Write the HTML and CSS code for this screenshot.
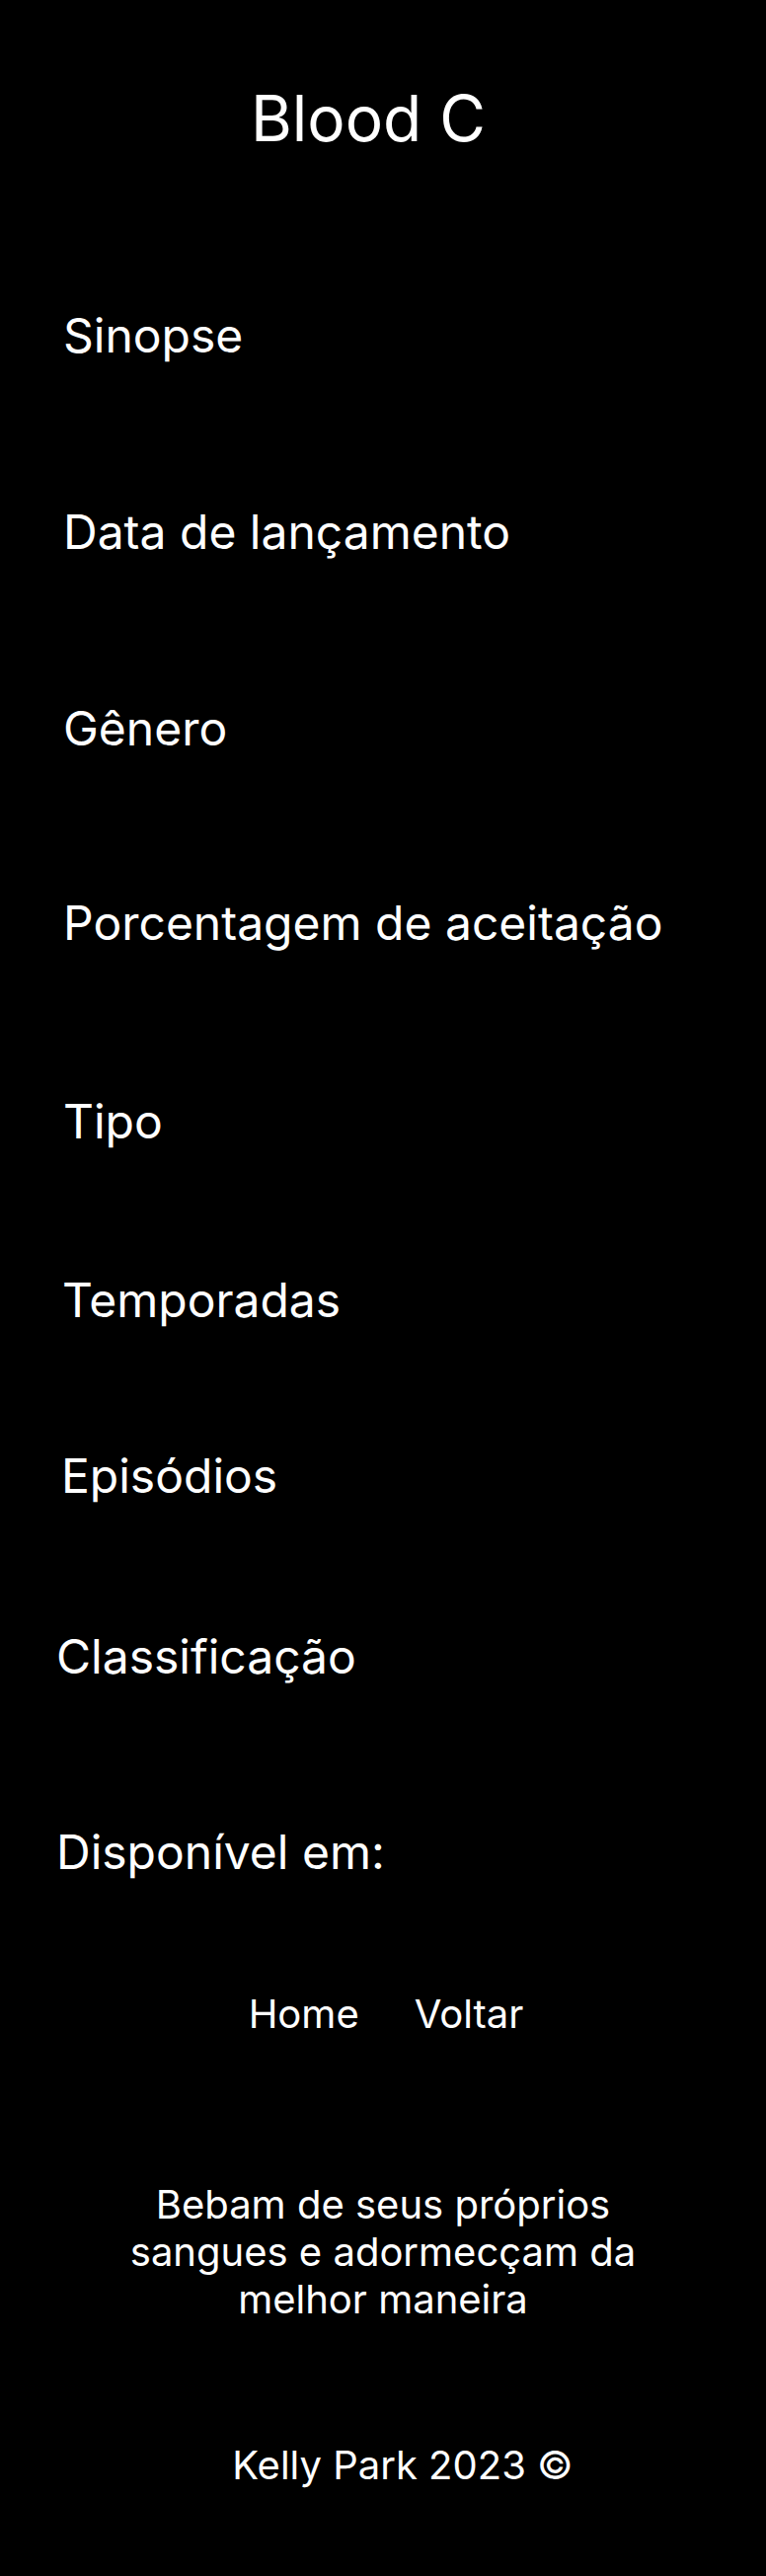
FILE: index.html
```html
<!DOCTYPE html>
<html lang="pt-BR">
<head>
<meta charset="utf-8">
<title>Blood C</title>
<link rel="stylesheet" href="styles.css">
</head>
<body>
<header class="header">
  <h1 class="title">Blood C</h1>
</header>
<main class="info">
  <p class="label label-a sp-first">Sinopse</p>
  <p class="label label-a sp-141">Data de lançamento</p>
  <p class="label label-a sp-141">Gênero</p>
  <p class="label label-a sp-139">Porcentagem de aceitação</p>
  <p class="label label-a sp-143">Tipo</p>
  <p class="label label-b sp-123">Temporadas</p>
  <p class="label label-c sp-120">Episódios</p>
  <p class="label label-d sp-125">Classificação</p>
  <p class="label label-d sp-140">Disponível em:</p>
</main>
<nav class="nav">
  <a class="nav-link" href="#">Home</a>
  <a class="nav-link" href="#">Voltar</a>
</nav>
<footer class="footer">
  <p class="quote">Bebam de seus próprios sangues e adormecçam da melhor maneira</p>
  <p class="copy">Kelly Park 2023 ©</p>
</footer>
</body>
</html>
```

FILE: styles.css
```css
html, body {
  margin: 0;
  padding: 0;
  background: #000;
}

body {
  color: #fff;
  font-family: Inter, "Noto Sans", "Liberation Sans", sans-serif;
  font-weight: 400;
  width: 776px;
  min-height: 2609px;
}

.header {
  display: flex;
  justify-content: center;
  padding-top: 81px;
  padding-right: 30px;
}

.title {
  margin: 0;
  font-size: 64px;
  line-height: 77px;
  font-weight: 400;
}

.info {
  display: flex;
  flex-direction: column;
  align-items: flex-start;
}

.label {
  margin: 0;
  font-size: 48px;
  line-height: 58px;
}

.label-a { padding-left: 64px; }
.label-b { padding-left: 63px; }
.label-c { padding-left: 62px; }
.label-d { padding-left: 57px; }

.sp-first { margin-top: 153px; }
.sp-141 { margin-top: 141px; }
.sp-140 { margin-top: 140px; }
.sp-139 { margin-top: 139px; }
.sp-143 { margin-top: 143px; }
.sp-123 { margin-top: 123px; }
.sp-120 { margin-top: 120px; }
.sp-125 { margin-top: 125px; }

.nav {
  display: flex;
  justify-content: center;
  gap: 56px;
  margin-top: 111px;
  padding-left: 6px;
}

.nav-link {
  color: #fff;
  text-decoration: none;
  font-size: 40px;
  line-height: 48px;
}

.footer {
  display: flex;
  flex-direction: column;
  align-items: center;
  padding-bottom: 86px;
}

.quote {
  margin: 145px 0 0;
  max-width: 540px;
  text-align: center;
  font-size: 40px;
  line-height: 48px;
}

.copy {
  margin: 120px 0 0;
  padding-left: 40px;
  font-size: 40px;
  line-height: 48px;
}
```
